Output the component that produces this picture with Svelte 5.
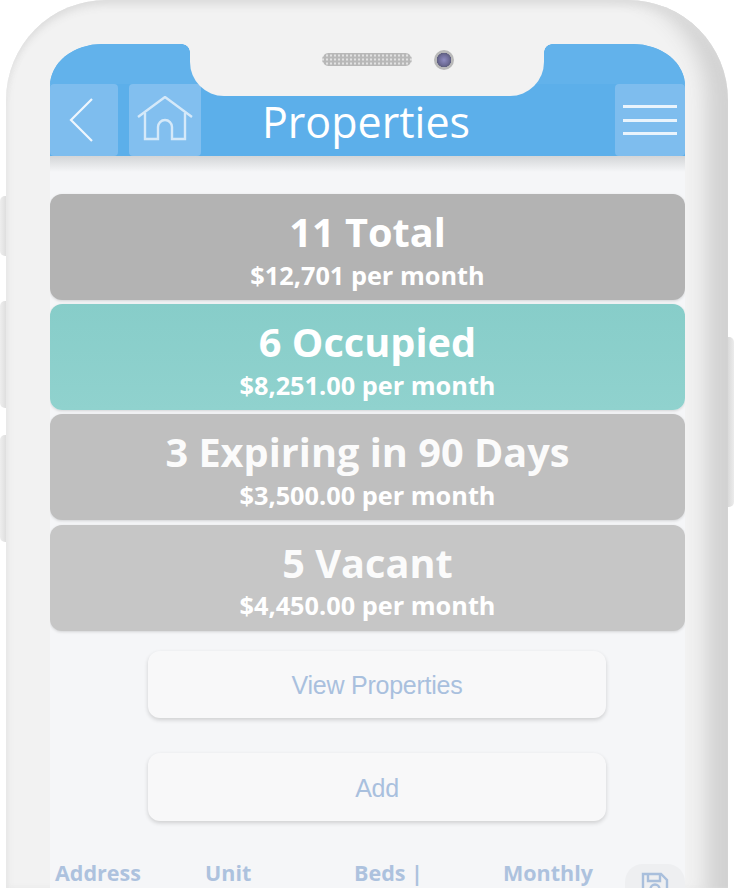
<script>
  const cards = [
    { title: '11 Total', sub: '$12,701 per month', tone: 'total' },
    { title: '6 Occupied', sub: '$8,251.00 per month', tone: 'occupied' },
    { title: '3 Expiring in 90 Days', sub: '$3,500.00 per month', tone: 'expiring' },
    { title: '5 Vacant', sub: '$4,450.00 per month', tone: 'vacant' }
  ];
  const columns = ['Address', 'Unit', 'Beds |', 'Monthly'];
</script>

<div class="stage">
  <span class="side side-a"></span>
  <span class="side side-b"></span>
  <span class="side side-c"></span>
  <span class="side side-d"></span>

  <div class="phone">
    <div class="screen">
      <header class="header">
        <div class="cap"></div>
        <div class="notch">
          <span class="speaker"></span>
          <span class="camera"></span>
        </div>
        <div class="bar">
          <button class="tile back" aria-label="Back">
            <svg width="26" height="46" viewBox="0 0 26 46" fill="none" stroke="#eef6fd" stroke-width="2.2">
              <path d="M23 2 L2 23 L23 44" />
            </svg>
          </button>
          <button class="tile home" aria-label="Home">
            <svg width="56" height="46" viewBox="0 0 56 46" fill="none" stroke="#d5e9f9" stroke-width="2.4">
              <path d="M1 21 L28 1 L55 21" />
              <path d="M8 17 V43 H21 V31 A7 7 0 0 1 35 31 V43 H48 V17" />
            </svg>
          </button>
          <h1>Properties</h1>
          <button class="tile menu" aria-label="Menu">
            <span></span><span></span><span></span>
          </button>
        </div>
        <div class="shade"></div>
      </header>

      <main class="content">
        <section class="cards">
          {#each cards as card}
            <div class="card {card.tone}">
              <div class="title">{card.title}</div>
              <div class="sub">{card.sub}</div>
            </div>
          {/each}
        </section>

        <div class="actions">
          <button class="action">View Properties</button>
          <button class="action">Add</button>
        </div>

        <div class="table-head">
          {#each columns as column}
            <span class="col">{column}</span>
          {/each}
          <button class="save" aria-label="Save">
            <svg width="28" height="28" viewBox="0 0 28 28" fill="none" stroke="#a9bfdc" stroke-width="2.4">
              <path d="M2 2 H20 L26 8 V26 H2 Z" />
              <path d="M7 2 V9 H19 V2" />
              <circle cx="14" cy="17" r="4.5" />
            </svg>
          </button>
        </div>
      </main>
    </div>
  </div>
</div>

<style>
  :global(body) {
    margin: 0;
    background: #fff;
  }
  .stage {
    position: relative;
    width: 734px;
    height: 888px;
    overflow: hidden;
    background: #fff;
  }
  .side {
    position: absolute;
    width: 8px;
    background: linear-gradient(90deg, #eeeeee, #d9d9d9);
    border-radius: 5px 0 0 5px;
  }
  .side-a { left: 0; top: 196px; height: 60px; }
  .side-b { left: 0; top: 301px; height: 107px; }
  .side-c { left: 0; top: 435px; height: 107px; }
  .side-d {
    left: 726px;
    top: 337px;
    height: 170px;
    background: linear-gradient(90deg, #d4d4d4, #ececec);
    border-radius: 0 5px 5px 0;
  }
  .phone {
    position: relative;
    box-sizing: border-box;
    width: 722px;
    height: 888px;
    margin-left: 6px;
    padding: 44px 43px 0 44px;
    border-radius: 100px 100px 0 0;
    background: #f2f2f2;
    box-shadow:
      inset 0 10px 9px -5px #dcdcdc,
      inset 5px 0 6px -3px #e6e6e6,
      inset -36px 0 20px -14px #d2d2d2;
  }
  .screen {
    width: 635px;
    height: 844px;
    overflow: hidden;
    border-radius: 52px 52px 0 0 / 42px 42px 0 0;
    background: #f5f6f8;
  }
  .header {
    position: relative;
    height: 112px;
    background: #5cafea;
  }
  .cap {
    height: 40px;
    background: #62b2eb;
  }
  .notch {
    position: absolute;
    left: 140px;
    top: 0;
    width: 354px;
    height: 52px;
    background: #f2f2f2;
    border-radius: 0 0 34px 34px;
  }
  .notch::before,
  .notch::after {
    content: '';
    position: absolute;
    top: 0;
    width: 8px;
    height: 8px;
    background: radial-gradient(circle at 0 100%, transparent 7.5px, #f2f2f2 8px);
  }
  .notch::before { left: -8px; }
  .notch::after { right: -8px; transform: scaleX(-1); }
  .speaker {
    position: absolute;
    left: 132px;
    top: 9px;
    width: 90px;
    height: 13px;
    box-sizing: border-box;
    border-radius: 7px;
    background-color: #b8b8b8;
    background-image: radial-gradient(circle, #e2e2e2 1.1px, transparent 1.3px);
    background-size: 4px 4px;
    background-position: 3px 0.5px;
  }
  .camera {
    position: absolute;
    left: 244px;
    top: 6px;
    width: 20px;
    height: 20px;
    border-radius: 50%;
    background: radial-gradient(circle, #8f8cc0 0, #6f6d98 5px, #5f5f80 7px, #b9b9b9 7.5px);
  }
  .bar {
    display: flex;
    align-items: flex-start;
    height: 72px;
  }
  .tile {
    display: flex;
    align-items: center;
    justify-content: center;
    height: 72px;
    padding: 0;
    border: 0;
    border-radius: 4px;
    background: #7ebdee;
  }
  .back {
    width: 68px;
    padding-right: 5px;
    box-sizing: border-box;
  }
  .home {
    width: 72px;
    margin-left: 11px;
    background: #82bfef;
    padding-bottom: 3px;
    box-sizing: border-box;
  }
  h1 {
    flex: 1;
    margin: 0;
    padding: 10px 84px 0 0;
    text-align: center;
    font: 400 43px/56px "Open Sans", sans-serif;
    color: #fff;
  }
  .menu {
    flex-direction: column;
    gap: 10.5px;
    width: 70px;
  }
  .menu span {
    display: block;
    width: 54px;
    height: 3px;
    background: #eaf4fc;
  }
  .shade {
    position: absolute;
    left: 0;
    right: 0;
    top: 112px;
    height: 16px;
    background: linear-gradient(#d3d5d7, #f5f6f8);
  }
  .content {
    display: flex;
    flex-direction: column;
    padding-top: 38px;
  }
  .cards {
    display: flex;
    flex-direction: column;
    gap: 4px;
  }
  .card {
    display: flex;
    flex-direction: column;
    align-items: center;
    box-sizing: border-box;
    height: 106px;
    padding-top: 13px;
    border-radius: 12px;
    color: #fff;
    font-family: "Open Sans", sans-serif;
    font-weight: 700;
    box-shadow: 0 1px 3px rgba(0, 0, 0, 0.14);
  }
  .total { background: #b3b3b3; }
  .occupied { background: linear-gradient(#87cdc9, #90d2ce); }
  .expiring { background: #bfbfbf; }
  .vacant { background: #c6c6c6; margin-top: 1px; }
  .title {
    font-size: 39.7px;
    line-height: 50px;
  }
  .sub {
    font-size: 25.3px;
    line-height: 32px;
    margin-top: 2px;
  }
  .vacant .sub { margin-top: 1px; }
  .expiring .title, .vacant .title { color: #fbfbfb; }
  .actions {
    display: flex;
    flex-direction: column;
    gap: 35px;
    margin: 20px 0 0 98px;
    width: 458px;
  }
  .action {
    height: 67px;
    padding: 2px 0 0;
    border: 0;
    border-radius: 12px;
    background: #f8f8f9;
    box-shadow: 0 2px 4px rgba(0, 0, 0, 0.16);
    font: 400 25px "Liberation Sans", sans-serif;
    color: #a9c0de;
    letter-spacing: -0.25px;
  }
  .action + .action {
    height: 68px;
  }
  .table-head {
    position: relative;
    display: grid;
    grid-template-columns: 150px 149px 149px 1fr;
    padding: 38px 0 0 5px;
    font: 700 21.5px/28px "Open Sans", sans-serif;
    color: #adc2de;
  }
  .save {
    position: absolute;
    right: 0;
    top: 43px;
    width: 60px;
    height: 60px;
    border: 0;
    border-radius: 18px;
    background: #eeeff1;
    display: flex;
    justify-content: center;
    align-items: flex-start;
    padding: 8px 0 0;
    box-sizing: border-box;
  }
</style>
